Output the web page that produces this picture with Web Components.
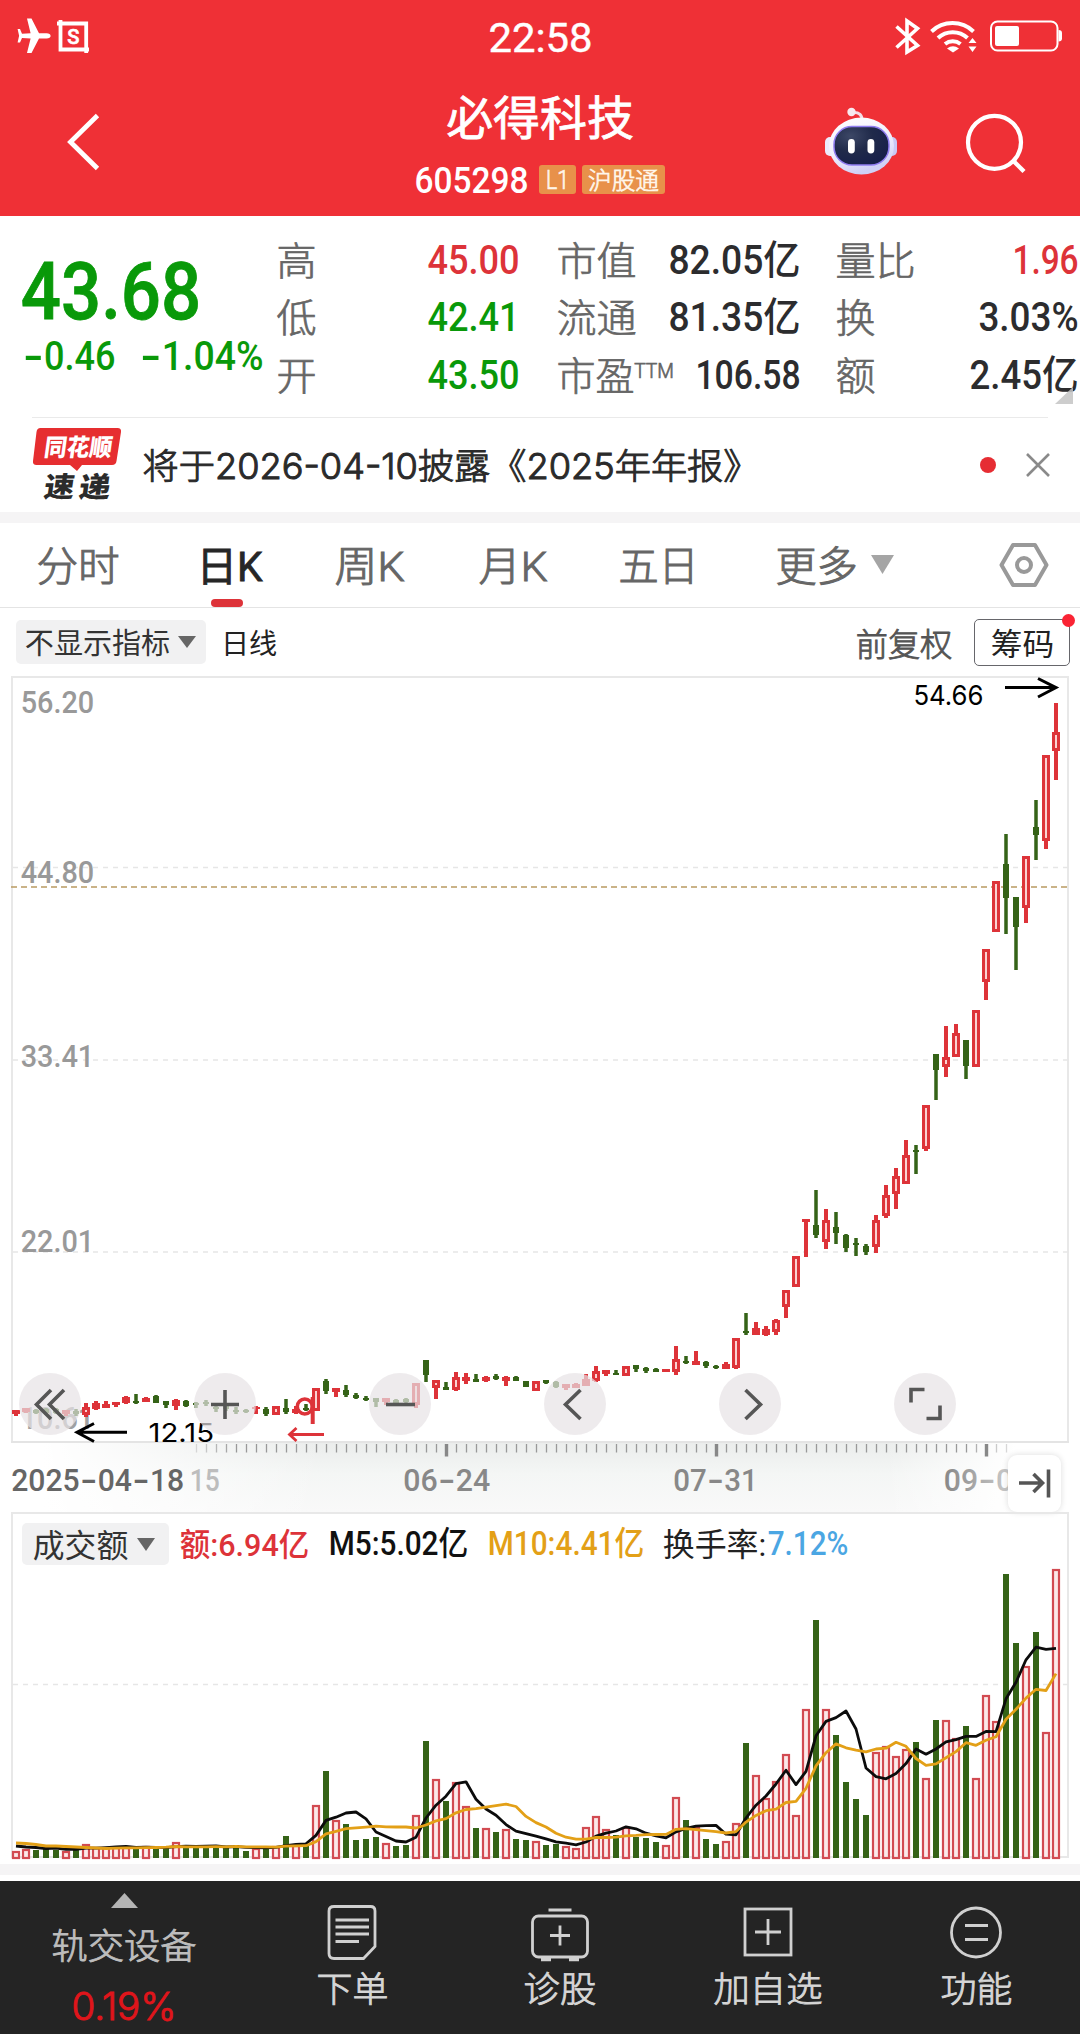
<!DOCTYPE html>
<html lang="zh-CN">
<head>
<meta charset="utf-8">
<title>必得科技 605298</title>
<style>
html,body{margin:0;padding:0;background:#fff}
body{width:1080px;height:2034px;overflow:hidden;font-family:Roboto,"Noto Sans CJK SC",sans-serif}
</style>
</head>
<body>
<stock-app></stock-app>
<script>
const RED='#dd3339', GREEN='#356317';
const FONT='Roboto,"Noto Sans CJK SC",sans-serif';
const FONT_UI='Inter,"Noto Sans CJK SC",sans-serif';

/* Text run whose ink starts at x, sits on baseline y and spans w pixels.
   Hyphens of the figure face are set wide and centred on the digits. */
function run(t,x,y,w,s,o={}){
  let body=t;
  if(!o.ui&&t.includes('-')){
    const d=(.1*s).toFixed(1);
    body=t.split('-').map((p,i)=>i?`<tspan font-family="Inter" font-weight="400" font-size="${s*1.3}" dy="${d}">-</tspan><tspan dy="-${d}">${p}</tspan>`:p).join('');
  }
  const c=o.color||'#222', light=+o.weight===300;
  const st=light||o.thick?` stroke="${c}" stroke-width="${o.thick||.7}"`:'';
  return `<text x="${x-.04*s}" y="${y}" textLength="${w+.08*s}" lengthAdjust="spacingAndGlyphs" font-size="${s}" font-weight="${o.weight||400}" font-family='${o.ui?FONT_UI:FONT}' fill="${c}"${st}>${body}</text>`;
}
function define(name,render){
  customElements.define(name,class extends HTMLElement{
    connectedCallback(){
      if(this.shadowRoot) return;
      this.attachShadow({mode:'open'}).innerHTML=render(this);
    }
  });
}
const A=(e,n,d)=>e.getAttribute(n)??d;

/* Fitted label: t text, w width, s size. Its box is the height of the capitals. */
define('fit-text',e=>{
  const t=A(e,'t'),w=+A(e,'w'),s=+A(e,'s');
  const cjk=/^[\u3000-\u9fff]/.test(t);
  const h=s*(cjk?.76:.711);
  return `<style>:host{display:block;flex:none;width:${w}px;height:${h}px}svg{display:block;overflow:visible}</style>
  <svg width="${w}" height="${h}">${run(t,0,h,w,s,{weight:A(e,'b',400),ui:e.hasAttribute('ui'),color:A(e,'c','currentColor'),thick:A(e,'k',0)})}</svg>`;
});
define('drop-mark',e=>`<style>:host{display:block;flex:none}svg{display:block}</style>
  <svg width="${A(e,'w')}" height="${A(e,'h')}" viewBox="0 0 10 10" preserveAspectRatio="none"><path d="M0 0H10L5 10Z" fill="${A(e,'c')}"/></svg>`);
define('section-gap',()=>`<style>:host{display:block;height:11px;background:#f5f4f5}</style>`);

define('status-bar',()=>`<style>
:host{display:grid;grid-template-columns:1fr auto 1fr;align-items:center;height:72px;color:#fff;background:#ef3036}
svg{display:block}.r{justify-self:end}fit-text{margin-top:4px}
</style>
<svg width="100" height="72" fill="#fff">
 <path d="M50.6 36c0-1.8-1.5-2.8-4-2.8H39L31.5 18.5H27l3.6 14.7-8.6.5-2-4.700H17.600l1.500 6.700-1.500 6.700H20l2-4.400 8.600.5L27 53h4.500L39 38.500h7.600c2.500 0 4-1 4-2.500Z"/>
 <path d="M60.500 20V49.500H89M57 23.500H86.200V53" fill="none" stroke="#fff" stroke-width="3.800"/>
 ${run('S',68,44,10.5,21,{weight:500,color:'#fff',thick:.6})}
</svg>
<fit-text t="22:58" w="101" s="41" k=".4"></fit-text>
<svg class="r" width="190" height="72" viewBox="890 0 190 72" fill="none" stroke="#fff">
 <path d="M896.500 26.500L917.500 45.500L907 52V21L917.500 28.500L896.500 47.500" stroke-width="3.600" stroke-linejoin="miter"/>
 <g stroke-width="4"><path d="M931.500 31.500a30.500 30.500 0 0 1 42 0"/><path d="M938 38a21.500 21.500 0 0 1 29.500 0"/><path d="M945 44a12.500 12.500 0 0 1 15.500 0"/></g>
 <path d="M947 48.500Q953 44 959 48.500L953 52.500ZM968.500 43L972.500 38L976.500 43ZM968.500 46.500L972.500 52L976.500 46.500Z" fill="#fff" stroke="none"/>
 <rect x="991" y="21.500" width="66.500" height="29" rx="6.500" stroke-width="2"/>
 <rect x="995" y="26" width="24" height="20" rx="2" fill="#fff" stroke="none"/>
 <path d="M1058.500 30Q1062 30 1062 33V38.500Q1062 41.500 1058.500 41.500Z" fill="#fff" stroke="none"/>
</svg>`);

define('tag-badge',e=>`<style>:host{display:flex;flex:none;align-items:center;justify-content:center;height:29px;border-radius:3px;background:#e8914a;color:#fff6ea;width:${A(e,'box')}px}</style>
<fit-text t="${A(e,'t')}" w="${A(e,'w')}" s="${A(e,'s')}" b="300"></fit-text>`);

define('title-bar',()=>`<style>
:host{display:grid;grid-template-columns:1fr auto 1fr;height:144px;color:#fff;background:#ef3036}
svg{display:block}.r{justify-self:end}
.mid{display:flex;flex-direction:column;align-items:center;padding-top:27px}
.sub{display:flex;align-items:center;margin-top:30.500px;height:29px}
</style>
<svg width="120" height="144" fill="none" stroke="#fff" stroke-width="4.800"><path d="M97.500 43.500L70.500 70L97.500 96.500"/></svg>
<div class="mid"><fit-text t="必得科技" w="184" s="47" k=".8"></fit-text>
<div class="sub"><fit-text t="605298" w="111" s="37.500" b="500" style="margin-right:12px"></fit-text><tag-badge t="L1" box="37" w="21" s="25" style="margin-right:6px"></tag-badge><tag-badge t="沪股通" box="83" w="69" s="23.500"></tag-badge></div></div>
<svg class="r" width="270" height="144" viewBox="810 72 270 144" fill="none">
 <defs><linearGradient id="sh" x1="0" y1="0" x2=".4" y2="1"><stop offset="0" stop-color="#fff"/><stop offset=".6" stop-color="#f0eefb"/><stop offset="1" stop-color="#cfd0f6"/></linearGradient>
 <radialGradient id="fc" cx=".3" cy=".25" r=".8"><stop offset="0" stop-color="#3c4766"/><stop offset=".5" stop-color="#202a4a"/><stop offset="1" stop-color="#17204a"/></radialGradient></defs>
 <path d="M862 121Q862.500 112 853 112.500" stroke="#f3dde6" stroke-width="3"/><circle cx="851.500" cy="112" r="4.200" fill="#f8e9ef"/>
 <rect x="825" y="137" width="12" height="19" rx="5" fill="#eceafb"/><rect x="885" y="137" width="12" height="19" rx="5" fill="#c9c8f4"/>
 <ellipse cx="861.500" cy="146" rx="32.500" ry="28.500" fill="url(#sh)"/>
 <rect x="834" y="126.500" width="55" height="38.500" rx="18" fill="url(#fc)" stroke="#8f7cf0" stroke-width="1.500"/>
 <rect x="848" y="139" width="6.800" height="14.500" rx="3.400" fill="#fff"/><rect x="867.500" y="139" width="6.800" height="14.500" rx="3.400" fill="#fff"/>
 <circle cx="994.500" cy="142.300" r="26.500" stroke="#fff" stroke-width="4.200"/><path d="M1013.500 161L1024 171.500" stroke="#fff" stroke-width="4.400"/>
</svg>`);

define('quote-panel',()=>{
  const row=(l,lw,v,vw,c,sup='')=>`<div class="row"><fit-text t="${l}" w="${lw}" s="39" b="300" c="#666"></fit-text>${sup}<i></i><fit-text t="${v}" w="${vw}" s="40" b="500" c="${c}"></fit-text></div>`;
  const G='#099909',K='#2c2c2e';
  return `<style>
:host{display:flex;height:201px;box-sizing:border-box;background:#fff;position:relative}
.price{width:278px;box-sizing:border-box;padding:45.500px 0 0 24px}
.chg{display:flex;gap:27px;margin-top:23.500px}
.col{display:flex;flex-direction:column;padding-top:15px}
.row{display:flex;align-items:center;height:57.500px}i{flex:1}
.sup{margin:-8px 0 0 2px}
.more{position:absolute;left:1055px;top:171px}
</style>
<div class="price"><fit-text t="43.68" w="174" s="80" b="500" k=".8" c="${G}"></fit-text>
<div class="chg"><fit-text t="-0.46" w="90" s="40" b="500" c="${G}"></fit-text><fit-text t="-1.04%" w="121" s="40" b="500" c="${G}"></fit-text></div></div>
<div class="col" style="width:240px">${row('高',37,'45.00',89,RED)}${row('低',37,'42.41',89,G)}${row('开',37,'43.50',89,G)}</div>
<div class="col" style="width:241px;margin-left:40px">${row('市值',77,'82.05亿',129,K)}${row('流通',77,'81.35亿',129,K)}${row('市盈',75,'106.58',102,K,'<fit-text class="sup" t="TTM" w="38" s="20.500" b="300" c="#666"></fit-text>')}</div>
<div class="col" style="width:240px;margin-left:38px">${row('量比',77,'1.96',63,RED)}${row('换',37,'3.03%',97,K)}${row('额',37,'2.45亿',106,K)}</div>
<svg class="more" width="18" height="17"><path d="M18 0V17H0Z" fill="#c4c4c4" opacity=".85"/></svg>`;
});

define('news-strip',()=>`<style>
:host{display:flex;align-items:center;height:95px;position:relative;background:#fff}
:host::before{content:"";position:absolute;left:32px;right:32px;top:0;height:1px;background:#eaeaea}
.logo{margin-left:32px;margin-right:22px}svg{display:block;flex:none}.dot{margin-left:auto;margin-right:30px}
</style>
<svg class="logo" width="90" height="95" viewBox="32 417 90 95">
 <path d="M40.500 428H117.500Q121.500 428 121 432L116.500 461Q116 465 112 465H82L77 471L70 465H36.500Q32.500 465 33 461L36.500 432Q37 428 40.500 428Z" fill="#e62e30"/>
 <g transform="translate(77 457) skewX(-8)">${run('同花顺',-33,-1,66,24,{weight:900,color:'#fff'})}</g>
 <g transform="translate(76 497) skewX(-8)">${run('速',-32,-.5,28,28,{weight:900,color:'#2b2b2b'})}${run('递',3,-.5,29,28,{weight:900,color:'#2b2b2b'})}</g>
</svg>
<fit-text t="将于2026-04-10披露《2025年年报》" w="614" s="35.500" b="300" k="1" c="#2a2a2a" ui style="margin-top:1px"></fit-text>
<svg class="dot" width="16" height="16"><circle cx="8" cy="8" r="8" fill="#e62d33"/></svg>
<svg width="24" height="24" style="margin-right:30px" stroke="#8a8a8a" stroke-width="2.600"><path d="M1 1L23 23M23 1L1 23"/></svg>`);

define('period-tab',e=>`<style>
:host{display:flex;flex:none;align-items:center;height:84px;position:relative;color:#666}
:host([on]){color:#262626}
:host([on])::after{content:"";position:absolute;left:50%;margin-left:-19px;bottom:0;width:32px;height:8px;border-radius:4px;background:${RED}}
fit-text{margin-top:1px}
</style><fit-text t="${A(e,'t')}" w="${A(e,'w')}" s="40.500" ${e.hasAttribute('on')?'b="400" k=".8"':'b="300" k="1"'}></fit-text><slot></slot>`);
define('period-tabs',()=>`<style>
:host{display:flex;align-items:center;height:85px;box-sizing:border-box;border-bottom:1px solid #e4e4e4;padding-left:38px;position:relative}
drop-mark{margin-left:15px;margin-top:-2px}svg{display:block;margin-left:105px}
</style>
<period-tab t="分时" w="80"></period-tab><period-tab on t="日K" w="63" style="margin-left:80px"></period-tab><period-tab t="周K" w="67" style="margin-left:75px"></period-tab><period-tab t="月K" w="66" style="margin-left:77px"></period-tab><period-tab t="五日" w="77" style="margin-left:74px"></period-tab><period-tab t="更多" w="79" style="margin-left:80px"><drop-mark w="23" h="19" c="#a5a5a5"></drop-mark></period-tab>
<svg width="50" height="48" viewBox="999 541 50 48" fill="none" stroke="#999" stroke-width="4" stroke-linejoin="round"><path d="M1013 545H1035L1046.500 565L1035 585H1013L1001.500 565Z"/><circle cx="1024" cy="565" r="7"/></svg>`);

define('chart-tools',()=>`<style>
:host{display:flex;align-items:center;height:68px;box-sizing:border-box;position:relative}
.chip{display:flex;align-items:center;gap:9px;height:44px;padding-left:10px;width:190px;box-sizing:border-box;margin-left:16px;background:#f1f1f2;border-radius:5px}
.box{display:flex;align-items:center;justify-content:center;width:96px;height:47px;box-sizing:border-box;border:1.500px solid #66666b;border-radius:5px;margin-left:23px;position:relative}
.box::after{content:"";position:absolute;right:-6px;top:-6px;width:13px;height:13px;border-radius:50%;background:#fa2434}
.d{margin-top:3px}
</style>
<div class="chip"><fit-text class="d" t="不显示指标" w="143" s="29" c="#333"></fit-text><drop-mark w="18" h="12" c="#666"></drop-mark></div>
<fit-text class="d" t="日线" w="54" s="28" c="#222" style="margin-left:16px"></fit-text>
<fit-text class="d" t="前复权" w="94" s="31.500" b="300" c="#555" k=".9" style="margin-left:auto"></fit-text>
<div class="box"><fit-text t="筹码" w="61" s="31" c="#222" style="margin-top:2px"></fit-text></div>
<span style="width:10px"></span>`);

/* Daily bars: colour, high, body top, body bottom, low, turnover top (canvas y). */
const BARS=`r 1410 1410 1414 1416 1851
r 1408 1408 1412 1413 1849
g 1409 1410 1413 1414 1850
g 1408 1409 1413 1415 1847
g 1408 1409 1413 1414 1850
r 1410 1410 1414 1416 1851
g 1409 1411 1414 1416 1849
r 1403 1407 1415 1417 1844
r 1401 1403 1409 1410 1847
r 1401 1404 1408 1408 1847
r 1402 1402 1405 1407 1847
r 1396 1397 1403 1404 1847
g 1394 1401 1403 1404 1849
r 1397 1398 1402 1402 1846
g 1395 1396 1403 1403 1848
g 1401 1401 1405 1408 1848
r 1399 1400 1406 1410 1842
g 1400 1401 1406 1407 1847
g 1402 1403 1405 1408 1847
g 1400 1402 1404 1406 1847
g 1406 1407 1409 1412 1846
g 1404 1406 1409 1411 1848
g 1407 1410 1412 1414 1845
g 1409 1410 1412 1413 1851
r 1406 1407 1409 1414 1848
g 1407 1409 1414 1416 1847
r 1406 1406 1415 1415 1846
g 1399 1408 1412 1414 1836
r 1406 1409 1413 1414 1845
g 1404 1408 1410 1411 1845
r 1388 1388 1411 1411 1805
g 1379 1381 1391 1394 1771
r 1388 1388 1392 1397 1820
g 1385 1390 1395 1397 1824
g 1393 1395 1398 1399 1840
g 1396 1398 1400 1401 1839
g 1398 1398 1402 1407 1837
r 1398 1398 1402 1405 1843
g 1399 1400 1403 1404 1846
g 1398 1399 1402 1404 1845
r 1383 1383 1405 1408 1815
g 1360 1360 1375 1382 1741
r 1380 1380 1388 1399 1779
g 1382 1387 1390 1390 1801
r 1372 1377 1390 1391 1782
r 1373 1377 1381 1384 1806
g 1374 1379 1382 1382 1828
r 1376 1377 1381 1382 1828
g 1374 1376 1379 1380 1832
r 1376 1377 1381 1386 1829
g 1376 1377 1381 1381 1839
g 1381 1381 1387 1387 1840
r 1381 1381 1391 1391 1841
g 1380 1380 1383 1384 1845
g 1381 1382 1387 1388 1844
r 1384 1384 1388 1390 1846
r 1383 1384 1388 1388 1848
r 1374 1379 1386 1386 1827
r 1366 1371 1381 1382 1816
r 1370 1370 1374 1376 1829
g 1370 1373 1375 1375 1835
r 1366 1366 1376 1376 1827
g 1365 1365 1369 1372 1837
g 1367 1368 1371 1373 1838
g 1368 1369 1372 1372 1842
r 1369 1369 1372 1372 1845
r 1346 1359 1372 1375 1797
g 1356 1361 1363 1364 1820
r 1351 1361 1365 1365 1827
g 1361 1362 1366 1368 1839
g 1365 1366 1368 1369 1844
r 1362 1364 1369 1369 1841
r 1338 1338 1368 1369 1823
g 1313 1331 1333 1335 1743
r 1322 1328 1335 1335 1775
r 1326 1329 1335 1336 1798
r 1319 1320 1332 1335 1781
r 1290 1290 1307 1318 1754
r 1256 1256 1287 1287 1815
r 1219 1219 1222 1257 1709
g 1190 1225 1235 1238 1620
r 1209 1220 1242 1249 1709
g 1212 1227 1233 1244 1735
g 1234 1235 1248 1252 1782
g 1238 1243 1245 1256 1799
g 1244 1246 1252 1255 1815
r 1215 1220 1247 1253 1752
r 1185 1195 1216 1218 1746
r 1168 1176 1194 1209 1756
r 1140 1155 1184 1184 1749
g 1145 1150 1152 1174 1742
r 1105 1105 1149 1151 1778
g 1054 1054 1070 1100 1720
r 1026 1057 1067 1077 1720
r 1024 1033 1057 1057 1738
g 1040 1040 1066 1079 1726
r 1010 1010 1067 1067 1778
r 949 949 982 1000 1695
r 881 881 932 932 1721
g 834 864 898 934 1574
g 897 897 927 970 1643
r 856 856 908 923 1666
g 800 827 835 860 1632
r 755 755 841 849 1732
r 703 732 751 780 1569`.split('\n').map(l=>{const [k,...n]=l.split(' ');return [k,...n.map(Number)]});

function candles(){
  return BARS.map(([k,h,t,b,l],i)=>{
    const x=16+10*i, c=k==='r'?RED:GREEN; let s='';
    if(k==='g') s+=`<rect x="${x-1.75}" y="${h}" width="3.500" height="${l-h}" fill="${c}"/><rect x="${x-3}" y="${t}" width="6" height="${Math.max(2,b-t)}" fill="${c}"/>`;
    else{
      if(t>h) s+=`<rect x="${x-2}" y="${h}" width="4" height="${t-h}" fill="${c}"/>`;
      if(l>b) s+=`<rect x="${x-2}" y="${b}" width="4" height="${l-b}" fill="${c}"/>`;
      s+= b-t>7 ? `<rect x="${x-2.5}" y="${t+1.5}" width="5" height="${b-t-3}" fill="#fbd2d2" stroke="${c}" stroke-width="3"/>`
                : `<rect x="${x-4}" y="${t}" width="8" height="${b-t}" fill="${c}"/>`;
    }
    return s;
  }).join('');
}
define('round-button',e=>{
  const g={
   first:'M32 17L17.500 31.500L32 46M45 17L30.500 31.500L45 46',
   prev:'M36.500 17L21.500 31.500L36.500 46',
   next:'M26.500 17L41.500 31.500L26.500 46',
   plus:'M17 31.500H45M31 17V46',
   minus:'M17 31.500H46',
   full:'M30.500 16.500H17V29.500M32.500 45.500H46V32.500'};
  return `<style>:host{display:block;width:62px;height:62px;border-radius:50%;background:rgba(231,227,229,.7)}svg{display:block}</style>
<svg width="62" height="62" fill="none" stroke="#565656" stroke-width="3.600"><path d="${g[A(e,'kind')]}"/></svg>`;
});
define('kline-chart',()=>`<style>
:host{display:block;height:767px;position:relative}svg{display:block}
nav{position:absolute;left:19px;top:697px;display:flex;gap:113px}
</style>
<svg width="1080" height="767" viewBox="0 676 1080 767" fill="none">
 <path d="M12 1442.500V677H1068V1442.500" stroke="#e8e8e8" stroke-width="2"/><path d="M11 1442H1069" stroke="#e4e4e4" stroke-width="2"/>
 <path d="M13 867.500H1068M13 1060H1068M13 1252H1068" stroke="#e6e6e6" stroke-width="1.500" stroke-dasharray="5 5"/>
 <path d="M11 887H1068" stroke="#b99a62" stroke-width="1.600" stroke-dasharray="6 4"/>
 ${[['56.20',713],['44.80',883],['33.41',1067],['22.01',1252],['10.61',1428.5]].map(([t,y])=>run(t,22,y,71,31.5,{weight:500,color:y>1400?'#a0a0a0':'#999'})).join('')}
 ${candles()}
 <circle cx="304.800" cy="1406.500" r="7.500" stroke="${RED}" stroke-width="3.600"/><path d="M312.700 1397V1424" stroke="${RED}" stroke-width="4"/>
 <path d="M324 1434.500H290M296.500 1428L289.500 1434.500L296.500 1441" stroke="${RED}" stroke-width="2.800"/>
 ${run('54.66',914.5,705,68,27,{ui:1,color:'#000'})}
 <path d="M1005 687.600H1056M1038 678.500L1056 687.600L1038 697" stroke="#000" stroke-width="3"/>
 ${run('12.15',149.5,1442,63.5,26,{ui:1,color:'#000'})}
 <path d="M127 1432.300H77M94 1423.500L77 1432.300L94 1441.500" stroke="#000" stroke-width="3"/>
</svg>
<nav><round-button kind="first"></round-button><round-button kind="plus"></round-button><round-button kind="minus"></round-button><round-button kind="prev"></round-button><round-button kind="next"></round-button><round-button kind="full"></round-button></nav>`);

define('date-axis',()=>{
  let ticks='';
  for(let i=18;i<100;i++){const x=16.5+10*i,big=[43,70,97].includes(i);
    const o=i<22?(i-16)/6:i>95?(102-i)/8:1;
    ticks+=`<path d="M${x} 1V${big?13.5:9.5}" stroke="${big?'#888':'#999'}" stroke-width="${big?3.4:1.3}" opacity="${big?1:o}"/>`;}
  return `<style>
:host{display:block;height:69px;position:relative}svg{display:block}
.end{position:absolute;left:1008px;top:11.500px;width:53px;height:57px;border-radius:9px;background:#fff;box-shadow:0 0 6px rgba(0,0,0,.14)}
</style>
<svg width="1080" height="69"><defs>
<linearGradient id="v" x1="0" y1="0" x2="0" y2="1"><stop offset="0" stop-color="#ebedec"/><stop offset=".45" stop-color="#f4f6f5"/><stop offset="1" stop-color="#f9f9f9"/></linearGradient>
<linearGradient id="h"><stop offset="0" stop-color="#fff"/><stop offset=".04" stop-color="#fff"/><stop offset=".3" stop-color="#fff" stop-opacity="0"/><stop offset=".82" stop-color="#fff" stop-opacity="0"/><stop offset=".94" stop-color="#fff"/></linearGradient>
<linearGradient id="t" gradientUnits="userSpaceOnUse" x1="944" y1="0" x2="1015" y2="0"><stop offset="0" stop-color="#888"/><stop offset="1" stop-color="#d0d0d0"/></linearGradient></defs>
<rect width="1080" height="69" fill="url(#v)"/><rect width="1080" height="69" fill="url(#h)"/>${ticks}
${run('2025-04-18',12.5,48,170.5,31.5,{weight:500,color:'#666'})}${run('15',191,48,27.5,31.5,{weight:500,color:'#bdbdbd'})}
${run('06-24',404.5,48,84.5,31.5,{weight:500,color:'#888'})}${run('07-31',674.5,48,82,31.5,{weight:500,color:'#888'})}${run('09-0',945,48,67,31.5,{weight:500,color:'url(#t)'})}
</svg>
<div class="end"><svg width="53" height="57" fill="none" stroke="#555" stroke-width="3.600"><path d="M11 28H34M25.500 19L34.500 28L25.500 37M40.500 14.500V42.500"/></svg></div>`;
});

define('turnover-chart',()=>{
  const base=1858, h=BARS.map(b=>base-b[5]);
  const ma=(n,head)=>h.map((_,i)=>{const y=i<head.length?head[i]:base-h.slice(Math.max(0,i-n+1),i+1).reduce((a,b)=>a+b)/Math.min(n,i+1);return `${i?'L':'M'}${16+10*i} ${y.toFixed(1)}`}).join('');
  const bars=BARS.map((b,i)=>{const x=16+10*i;return b[0]==='g'?`<rect x="${x-3}" y="${b[5]}" width="6" height="${base-b[5]}" fill="${GREEN}"/>`
    :`<rect x="${x-3}" y="${b[5]+1}" width="6" height="${base-b[5]-1}" fill="#fce9e9" stroke="#d24b52" stroke-width="2.200"/>`}).join('');
  return `<style>
:host{display:block;height:352px;position:relative}.plot{display:block}
header{position:absolute;left:22px;top:11px;height:42px;display:flex;align-items:center}
.chip{display:flex;align-items:center;gap:10px;height:42px;width:147px;box-sizing:border-box;padding-left:12px;background:#f1f1f2;border-radius:5px}
</style>
<svg class="plot" width="1080" height="352" viewBox="0 1512 1080 352" fill="none">
<path d="M12 1857V1513H1068V1857Z" stroke="#e8e8e8" stroke-width="2"/><path d="M13 1684.500H1068" stroke="#e6e6e6" stroke-width="1.500" stroke-dasharray="5 5"/>
${bars}
<path d="${ma(5,[1846,1847,1847.5,1848.5,1848])}" stroke="#0c0c0c" stroke-width="2.800" stroke-linejoin="round"/>
<path d="${ma(10,[1843,1843.5,1844.5,1846,1846,1846.5,1847,1847.5,1848])}" stroke="#e3a017" stroke-width="2.800" stroke-linejoin="round"/>
</svg>
<header><div class="chip"><fit-text t="成交额" w="93" s="31.500" c="#333" style="margin-top:1px"></fit-text><drop-mark w="18" h="13" c="#666"></drop-mark></div>
<fit-text t="额:6.94亿" w="127" s="32" b="500" c="${RED}" style="margin-left:12px"></fit-text>
<fit-text t="M5:5.02亿" w="137" s="33" b="500" c="#111" style="margin-left:22px"></fit-text>
<fit-text t="M10:4.41亿" w="154" s="33" b="500" c="#e3a017" style="margin-left:22px"></fit-text>
<fit-text t="换手率:" w="101" s="32" c="#222" style="margin-left:21px"></fit-text>
<fit-text t="7.12%" w="78" s="33" b="500" c="#4ba6e3" style="margin-left:4px"></fit-text></header>`;
});

define('nav-item',e=>`<style>
:host{display:flex;flex-direction:column;align-items:center;width:208px;flex:none;color:#d6d6d6;padding-top:22px;box-sizing:border-box}
svg{display:block;margin-bottom:12px}</style>
<svg width="60" height="60" viewBox="0 0 60 60" fill="none" stroke="#d0d0d0" stroke-width="2.800">${{
 order:'<path d="M12 3.500H48.500Q53 3.500 53 8V43.500L41.500 55.500H12Q7 55.500 7 50.500V8Q7 3.500 12 3.500ZM13.500 17H47M13.500 24H47M13.500 31H47M13.500 38.500H37"/>',
 clinic:'<rect x="2.500" y="13" width="55" height="41" rx="6"/><path d="M18.500 7H41.500M20 32.500H40M30 22.500V42.500"/><path d="M11 56H21M39 56H49" stroke-width="4.500"/>',
 add:'<rect x="7" y="6" width="46" height="46"/><path d="M17 29H43M30 16V42"/>',
 menu:'<circle cx="30" cy="29.500" r="24.500"/><path d="M19 22.500H42M19 36.500H42"/>'}[A(e,'kind')]}</svg>
<fit-text t="${A(e,'t')}" w="${A(e,'w')}" s="35.500" b="300" k=".9"></fit-text>`);
define('bottom-nav',()=>`<style>
:host{display:flex;height:153px;background:#242424;margin-top:6px}
.sector{width:248px;display:flex;flex-direction:column;align-items:center;padding-top:12px;box-sizing:border-box}
svg{display:block}</style>
<div class="sector"><svg width="27" height="15"><path d="M0 15L13.500 0L27 15Z" fill="#b4b4b4"/></svg>
<fit-text t="轨交设备" w="142" s="35.500" b="300" k=".9" c="#bdbdbd" style="margin-top:24px"></fit-text>
<fit-text t="0.19%" w="102" s="38.500" b="300" k=".9" c="#e0151b" ui style="margin-top:34px"></fit-text></div>
<nav-item kind="order" t="下单" w="69"></nav-item><nav-item kind="clinic" t="诊股" w="70"></nav-item><nav-item kind="add" t="加自选" w="106"></nav-item><nav-item kind="menu" t="功能" w="69"></nav-item>`);

define('stock-app',()=>`<style>:host{display:flex;flex-direction:column;width:1080px;height:2034px;background:#fff}:host>*{flex:none}</style>
<status-bar></status-bar><title-bar></title-bar><quote-panel></quote-panel><news-strip></news-strip><section-gap></section-gap>
<period-tabs></period-tabs><chart-tools></chart-tools><kline-chart></kline-chart><date-axis></date-axis><turnover-chart></turnover-chart><section-gap></section-gap><bottom-nav></bottom-nav>`);
</script>
</body>
</html>
